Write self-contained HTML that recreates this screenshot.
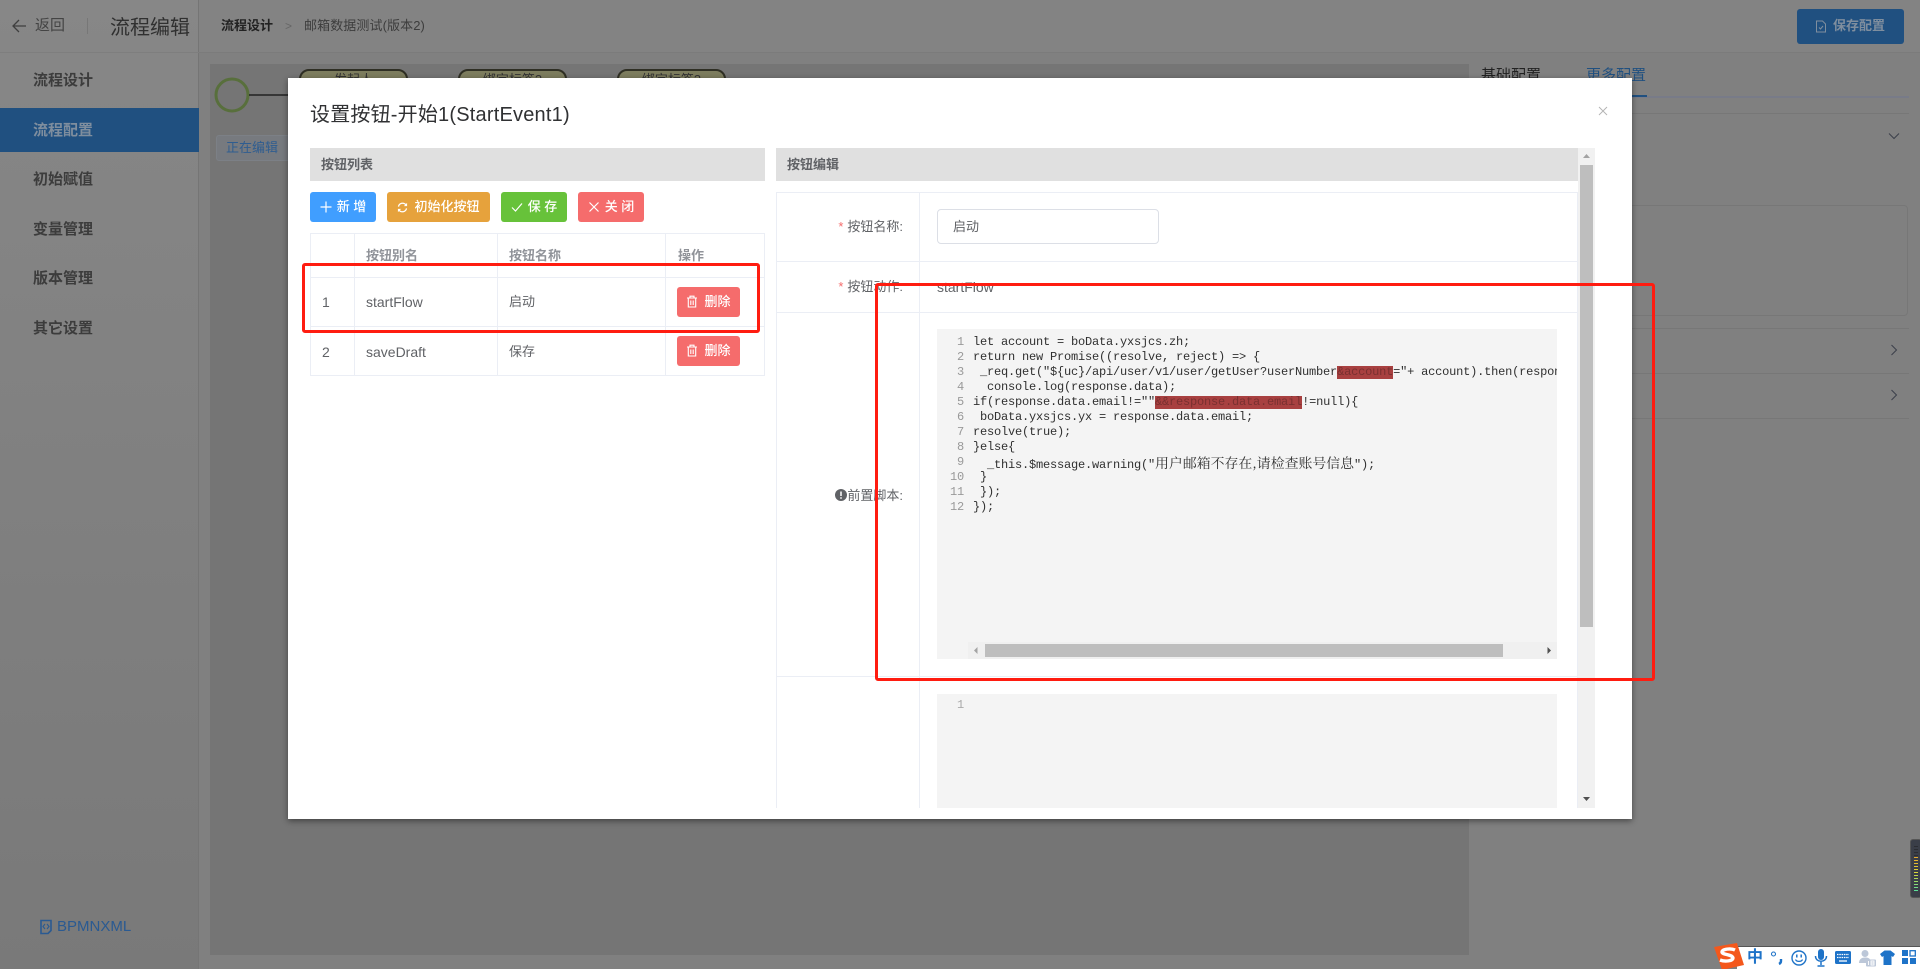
<!DOCTYPE html>
<html lang="zh">
<head>
<meta charset="utf-8">
<title>流程编辑</title>
<style>
html,body{margin:0;padding:0;width:1920px;height:969px;overflow:hidden;background:#808080}
body{position:relative;font-family:"Liberation Sans","Noto Sans CJK SC",sans-serif;font-size:13px;color:#606266}
.a{position:absolute}
.t{position:absolute;white-space:nowrap}
.side{left:0;top:0;width:199px;height:969px;background:linear-gradient(#878787,#797979);border-right:1px solid #757575;box-sizing:border-box}
.si{position:absolute;left:33px;font-size:15px;font-weight:700;color:#3c3c3c;line-height:20px;white-space:nowrap}
.modal{left:288px;top:78px;width:1344px;height:741px;background:#fff;box-shadow:0 2px 6px rgba(0,0,0,.45)}
.sec{background:#e0e0e0;height:33px;line-height:33px;font-weight:700;font-size:13px;color:#606266;box-sizing:border-box;padding-left:11px}
.btn{position:absolute;height:30px;line-height:30px;border-radius:3px;color:#fff;font-size:13px;font-weight:500;text-align:center;white-space:nowrap}
.btn svg{vertical-align:-2px;margin-right:5px}
.l{position:absolute;background:#ebeef5}
.code{position:absolute;background:#f4f4f4;overflow:hidden}
.cl{position:absolute;left:36px;height:15px;line-height:15px;font-family:"Liberation Mono","Noto Serif CJK SC",monospace;font-size:12px;letter-spacing:-.2px;color:#303030;white-space:pre}
.n{position:absolute;left:0;width:27px;text-align:right;height:15px;line-height:15px;font-family:"Liberation Mono",monospace;font-size:12px;letter-spacing:-.2px;color:#999}
.cl b{font-weight:400;font-family:"Noto Serif CJK SC",serif;font-size:13.9px;letter-spacing:0}
.cl i{font-style:normal;background:#a84040;color:#7a3030;display:inline-block;height:13px;line-height:13px}
.red{position:absolute;border:3px solid #ff1c10;border-radius:3px;box-sizing:border-box;pointer-events:none}
.lab{position:absolute;right:1017px;font-size:13px;color:#606266;line-height:20px;white-space:nowrap}
.lab s{text-decoration:none;color:#f56c6c;margin-right:4px}
.task{position:absolute;top:69px;width:109px;height:60px;background:#7d7d5e;border:2px solid #2f2f24;border-radius:10px;box-sizing:border-box;text-align:center;font-size:13px;color:#333;line-height:18px}
.bluei{color:#1e73c8}
.lat{font-size:14px}
</style>
</head>
<body>
<!-- background page -->
<div class="a" style="left:199px;top:0;width:1721px;height:52px;background:#838383;border-bottom:1px solid #7b7b7b"></div>
<div class="a side"></div>
<div class="a" style="left:0;top:0;width:199px;height:52px;border-bottom:1px solid #7e7e7e;box-sizing:content-box"></div>
<svg class="a" style="left:10px;top:17px" width="20" height="18" viewBox="0 0 20 18"><path d="M16 9H3M9 3L3 9l6 6" fill="none" stroke="#3f3f3f" stroke-width="1.3"/></svg>
<div class="t" style="left:35px;top:16px;font-size:15px;line-height:20px;color:#444">返回</div>
<div class="a" style="left:87px;top:18px;width:1px;height:16px;background:#777"></div>
<div class="t" style="left:110px;top:14px;font-size:20px;line-height:28px;color:#303030">流程编辑</div>
<div class="t" style="left:221px;top:16px;font-size:13px;font-weight:700;line-height:20px;color:#222">流程设计</div>
<div class="t" style="left:285px;top:16px;font-size:12px;line-height:20px;color:#666">&gt;</div>
<div class="t" style="left:304px;top:16px;font-size:13px;letter-spacing:.1px;line-height:20px;color:#3d3d3d">邮箱数据测试(版本2)</div>

<div class="a" style="left:0;top:108px;width:199px;height:44px;background:#205080"></div>
<div class="si" style="top:71px">流程设计</div>
<div class="si" style="top:121px;color:#7f8e9e">流程配置</div>
<div class="si" style="top:170px">初始赋值</div>
<div class="si" style="top:220px">变量管理</div>
<div class="si" style="top:269px">版本管理</div>
<div class="si" style="top:319px">其它设置</div>
<svg class="a" style="left:39px;top:919px" width="14" height="16" viewBox="0 0 14 16"><path d="M2 1.500h10v10l-3 3H2z" fill="none" stroke="#2a5a92" stroke-width="1.600"/><path d="M6 5L4 7.500 6 10M8 5l2 2.500L8 10" fill="none" stroke="#2a5a92" stroke-width="1.100"/></svg>
<div class="t" style="left:57px;top:917px;font-size:15px;line-height:20px;color:#2a5a92">BPMNXML</div>

<!-- canvas -->
<div class="a" style="left:210px;top:64px;width:1259px;height:891px;background:#757575"></div>
<svg class="a" style="left:210px;top:64px" width="90" height="60" viewBox="0 0 90 60"><circle cx="22" cy="31" r="16" fill="none" stroke="#586f3c" stroke-width="3"/><path d="M39 31H78" stroke="#111" stroke-width="1.300"/></svg>
<div class="task" style="left:299px">发起人</div>
<div class="task" style="left:458px">绑定标签2</div>
<div class="task" style="left:617px">绑定标签3</div>
<div class="a" style="left:216px;top:135px;width:90px;height:26px;background:#777a7f;border:1px solid #7c8086;box-sizing:border-box;border-radius:3px"></div>
<div class="t" style="left:226px;top:138px;font-size:13px;line-height:20px;color:#2f5d90">正在编辑</div>

<!-- right panel -->
<div class="t" style="left:1481px;top:64px;font-size:15px;line-height:24px;color:#222">基础配置</div>
<div class="t" style="left:1586px;top:64px;font-size:15px;line-height:24px;color:#205080">更多配置</div>
<div class="a" style="left:1469px;top:96px;width:440px;height:2px;background:#787b88"></div>
<div class="a" style="left:1586px;top:95px;width:61px;height:2px;background:#205080"></div>
<div class="a" style="left:1469px;top:113px;width:440px;height:1px;background:#777"></div>
<div class="a" style="left:1480px;top:205px;width:428px;height:111px;border:1px solid #777;border-radius:4px;box-sizing:border-box"></div>
<div class="a" style="left:1469px;top:328px;width:440px;height:1px;background:#777"></div>
<div class="a" style="left:1469px;top:373px;width:440px;height:1px;background:#777"></div>
<div class="a" style="left:1469px;top:418px;width:440px;height:1px;background:#777"></div>
<svg class="a" style="left:1888px;top:131px" width="12" height="10" viewBox="0 0 12 10"><path d="M1 2.500l5 5 5-5" fill="none" stroke="#3b3f4a" stroke-width="1"/></svg>
<svg class="a" style="left:1889px;top:344px" width="10" height="12" viewBox="0 0 10 12"><path d="M2.500 1l5 5-5 5" fill="none" stroke="#3b3f4a" stroke-width="1"/></svg>
<svg class="a" style="left:1889px;top:389px" width="10" height="12" viewBox="0 0 10 12"><path d="M2.500 1l5 5-5 5" fill="none" stroke="#3b3f4a" stroke-width="1"/></svg>
<div class="a" style="left:1797px;top:9px;width:107px;height:35px;background:#205080;border-radius:3px"></div>
<svg class="a" style="left:1815px;top:20px" width="12" height="13" viewBox="0 0 12 13"><path d="M1.500 1h6l3 3v8h-9z" fill="none" stroke="#7f8e9e" stroke-width="1"/><path d="M4 7.500l1.500 1.500L8 6" fill="none" stroke="#7f8e9e" stroke-width="1"/></svg>
<div class="t" style="left:1833px;top:16px;font-size:13px;font-weight:700;line-height:20px;color:#7f8e9e">保存配置</div>

<!-- meter -->
<div class="a" style="left:1910px;top:839px;width:12px;height:59px;background:#3a3e48;border-radius:3px;border:1px solid #555;box-sizing:border-box"></div>
<div class="a" style="left:1914px;top:846px;width:4px;height:46px;background:repeating-linear-gradient(#2b2d33 0 1px,transparent 1px 3px)"></div>
<div class="a" style="left:1914px;top:857px;width:4px;height:35px;background:repeating-linear-gradient(transparent 0 1px,#3a3e48 1px 3px),linear-gradient(#e6a82a,#d8d838 45%,#52e0a0)"></div>

<!-- modal -->
<div class="a modal"></div>
<div class="t" style="left:310px;top:100px;font-size:20px;letter-spacing:.2px;line-height:30px;color:#303133">设置按钮-开始1(StartEvent1)</div>
<svg class="a" style="left:1598px;top:106px" width="10" height="10" viewBox="0 0 10 10"><path d="M1 1l8 8M9 1L1 9" stroke="#b5b5b5" stroke-width="1"/></svg>

<div class="a sec" style="left:310px;top:148px;width:455px">按钮列表</div>
<div class="btn" style="left:310px;top:192px;width:66px;background:#409eff"><svg width="12" height="12" viewBox="0 0 12 12"><path d="M6 .5v11M.5 6h11" stroke="#fff" stroke-width="1.200"/></svg>新 增</div>
<div class="btn" style="left:387px;top:192px;width:103px;background:#e6a23c"><svg width="11" height="11" viewBox="0 0 12 12" style="margin-right:6px"><path d="M10 3.500A4.600 4.600 0 0 0 1.600 5M2 8.500a4.600 4.600 0 0 0 8.400-1.500" fill="none" stroke="#fff" stroke-width="1.400"/><path d="M11 1v3.500H7.500M1 11V7.500h3.500" fill="#fff"/></svg>初始化按钮</div>
<div class="btn" style="left:501px;top:192px;width:66px;background:#67c23a"><svg width="12" height="12" viewBox="0 0 12 12"><path d="M1 6.500l3.500 3.500L11 2.500" fill="none" stroke="#fff" stroke-width="1.200"/></svg>保 存</div>
<div class="btn" style="left:578px;top:192px;width:66px;background:#f56c6c"><svg width="12" height="12" viewBox="0 0 12 12"><path d="M1.500 1.500l9 9M10.500 1.500l-9 9" stroke="#fff" stroke-width="1.200"/></svg>关 闭</div>

<!-- left table -->
<div class="l" style="left:310px;top:233px;width:455px;height:1px"></div>
<div class="l" style="left:310px;top:277px;width:455px;height:1px"></div>
<div class="l" style="left:310px;top:326px;width:455px;height:1px"></div>
<div class="l" style="left:310px;top:375px;width:455px;height:1px"></div>
<div class="l" style="left:310px;top:233px;width:1px;height:143px"></div>
<div class="l" style="left:354px;top:233px;width:1px;height:143px"></div>
<div class="l" style="left:497px;top:233px;width:1px;height:143px"></div>
<div class="l" style="left:665px;top:233px;width:1px;height:143px"></div>
<div class="l" style="left:764px;top:233px;width:1px;height:143px"></div>
<div class="t" style="left:366px;top:246px;line-height:20px;font-weight:700;color:#909399">按钮别名</div>
<div class="t" style="left:509px;top:246px;line-height:20px;font-weight:700;color:#909399">按钮名称</div>
<div class="t" style="left:678px;top:246px;line-height:20px;font-weight:700;color:#909399">操作</div>
<div class="t lat" style="left:322px;top:292px;line-height:20px">1</div>
<div class="t lat" style="left:366px;top:292px;line-height:20px">startFlow</div>
<div class="t" style="left:509px;top:292px;line-height:20px">启动</div>
<div class="t lat" style="left:322px;top:342px;line-height:20px">2</div>
<div class="t lat" style="left:366px;top:342px;line-height:20px">saveDraft</div>
<div class="t" style="left:509px;top:342px;line-height:20px">保存</div>
<div class="btn" style="left:677px;top:287px;width:63px;background:#f56c6c"><svg width="12" height="13" viewBox="0 0 12 13" style="margin-right:6px"><path d="M1 3h10M4 3V1.200h4V3M2.300 3v9h7.400V3M4.800 5.500v4.500M7.200 5.500v4.500" fill="none" stroke="#fff" stroke-width="1.100"/></svg>删除</div>
<div class="btn" style="left:677px;top:336px;width:63px;background:#f56c6c"><svg width="12" height="13" viewBox="0 0 12 13" style="margin-right:6px"><path d="M1 3h10M4 3V1.200h4V3M2.300 3v9h7.400V3M4.800 5.500v4.500M7.200 5.500v4.500" fill="none" stroke="#fff" stroke-width="1.100"/></svg>删除</div>

<!-- right section -->
<div class="a sec" style="left:776px;top:148px;width:802px">按钮编辑</div>
<div class="l" style="left:776px;top:192px;width:802px;height:1px"></div>
<div class="l" style="left:776px;top:261px;width:802px;height:1px"></div>
<div class="l" style="left:776px;top:312px;width:802px;height:1px"></div>
<div class="l" style="left:776px;top:676px;width:802px;height:1px"></div>
<div class="l" style="left:776px;top:192px;width:1px;height:616px"></div>
<div class="l" style="left:919px;top:192px;width:1px;height:616px"></div>
<div class="l" style="left:1577px;top:192px;width:1px;height:616px"></div>
<div class="lab" style="top:217px"><s>*</s>按钮名称:</div>
<div class="lab" style="top:277px"><s>*</s>按钮动作:</div>
<div class="lab" style="top:486px"><svg width="12" height="12" viewBox="0 0 12 12" style="vertical-align:-1px"><circle cx="6" cy="6" r="6" fill="#606266"/><path d="M6 2.500v4.500M6 8.300v1.400" stroke="#fff" stroke-width="1.500"/></svg>前置脚本:</div>
<div class="a" style="left:937px;top:209px;width:222px;height:35px;border:1px solid #dcdfe6;border-radius:4px;box-sizing:border-box"></div>
<div class="t" style="left:953px;top:217px;line-height:20px">启动</div>
<div class="t lat" style="left:937px;top:277px;line-height:20px">startFlow</div>

<div class="code" style="left:937px;top:329px;width:620px;height:330px">
<div class="n" style="top:6px">1</div><div class="n" style="top:21px">2</div><div class="n" style="top:36px">3</div><div class="n" style="top:51px">4</div><div class="n" style="top:66px">5</div><div class="n" style="top:81px">6</div><div class="n" style="top:96px">7</div><div class="n" style="top:111px">8</div><div class="n" style="top:126px">9</div><div class="n" style="top:141px">10</div><div class="n" style="top:156px">11</div><div class="n" style="top:171px">12</div>
<div class="cl" style="top:6px">let account = boData.yxsjcs.zh;</div>
<div class="cl" style="top:21px">return new Promise((resolve, reject) =&gt; {</div>
<div class="cl" style="top:36px"> _req.get("${uc}/api/user/v1/user/getUser?userNumber<i>&amp;account</i>="+ account).then(response =&gt; {</div>
<div class="cl" style="top:51px">  console.log(response.data);</div>
<div class="cl" style="top:66px">if(response.data.email!=""<i>&amp;&amp;response.data.email</i>!=null){</div>
<div class="cl" style="top:81px"> boData.yxsjcs.yx = response.data.email;</div>
<div class="cl" style="top:96px">resolve(true);</div>
<div class="cl" style="top:111px">}else{</div>
<div class="cl" style="top:126px">  _this.$message.warning("<b>用户邮箱不存在,请检查账号信息</b>");</div>
<div class="cl" style="top:141px"> }</div>
<div class="cl" style="top:156px"> });</div>
<div class="cl" style="top:171px">});</div>
<div class="a" style="left:31px;top:313px;width:589px;height:17px;background:#f0f0f0"></div>
<div class="a" style="left:48px;top:315px;width:518px;height:13px;background:#bebebe"></div>
<svg class="a" style="left:36px;top:317px" width="6" height="9" viewBox="0 0 6 9"><path d="M4.500 1L1 4.500 4.500 8z" fill="#a3a3a3"/></svg>
<svg class="a" style="left:609px;top:317px" width="6" height="9" viewBox="0 0 6 9"><path d="M1.500 1L5 4.500 1.500 8z" fill="#505050"/></svg>
</div>
<div class="code" style="left:937px;top:694px;width:620px;height:114px">
<div class="n" style="top:4px;width:27px;color:#aaa">1</div>
</div>

<!-- vertical scrollbar -->
<div class="a" style="left:1578px;top:148px;width:17px;height:660px;background:#f1f1f1"></div>
<div class="a" style="left:1580px;top:165px;width:13px;height:462px;background:#bebebe"></div>
<svg class="a" style="left:1582px;top:153px" width="9" height="6" viewBox="0 0 9 6"><path d="M4.500 1L8 5H1z" fill="#a3a3a3"/></svg>
<svg class="a" style="left:1582px;top:796px" width="9" height="6" viewBox="0 0 9 6"><path d="M1 1h7L4.500 5z" fill="#505050"/></svg>

<!-- annotation rects -->
<div class="red" style="left:302px;top:263px;width:458px;height:70px"></div>
<div class="red" style="left:875px;top:283px;width:780px;height:398px"></div>

<!-- IME bar -->
<div class="a" style="left:1737px;top:946px;width:183px;height:23px;background:#fff;border-top:1px solid #555;box-sizing:border-box"></div>
<svg class="a" style="left:1713px;top:942px" width="32" height="27" viewBox="0 0 32 27"><path d="M1 5L24 1l7 22-22 5z" fill="#f4581c"/><path d="M22 8c-4-2-13-1-13 2 0 3 10 2 11 6 0 3-8 4-13 2" fill="none" stroke="#fff" stroke-width="3.400"/></svg>
<div class="t bluei" style="left:1747px;top:948px;font-size:16px;font-weight:700;line-height:20px">中</div>
<svg class="a" style="left:1770px;top:950px" width="14" height="16" viewBox="0 0 14 16"><circle cx="3.500" cy="4" r="2" fill="none" stroke="#1e73c8" stroke-width="1.100"/><path d="M11 9v2c0 1.500-1 2.500-2 3" fill="none" stroke="#1e73c8" stroke-width="2.400"/></svg>
<svg class="a" style="left:1791px;top:950px" width="16" height="16" viewBox="0 0 16 16"><circle cx="8" cy="8" r="7" fill="none" stroke="#1e73c8" stroke-width="1.400"/><path d="M5.800 4.500v3M10.200 4.500v3" stroke="#1e73c8" stroke-width="1.500"/><path d="M4.500 9.500c1 2.500 6 2.500 7 0" fill="none" stroke="#1e73c8" stroke-width="1.200"/></svg>
<svg class="a" style="left:1814px;top:949px" width="14" height="18" viewBox="0 0 14 18"><rect x="4" y="0" width="6" height="11" rx="3" fill="#1e73c8"/><path d="M1.500 7c0 7 11 7 11 0M7 13v3M3.500 17h7" fill="none" stroke="#1e73c8" stroke-width="1.500"/></svg>
<svg class="a" style="left:1835px;top:951px" width="16" height="13" viewBox="0 0 16 13"><rect width="16" height="13" rx="1.500" fill="#1e73c8"/><path d="M2 3.500h12M2 6.500h12" stroke="#fff" stroke-width="1.300" stroke-dasharray="1.500 .8"/><path d="M4 10h8" stroke="#fff" stroke-width="1.300"/></svg>
<svg class="a" style="left:1858px;top:949px" width="18" height="18" viewBox="0 0 18 18"><circle cx="7" cy="4.500" r="3.500" fill="#bcc7d8"/><path d="M1 14c0-4 3-5.500 6-5.500s4 .5 5 2v3.500z" fill="#bcc7d8"/><rect x="8" y="10.500" width="10" height="7" rx="1" fill="#bcc7d8"/><path d="M10.500 12v4M13 12h3v4h-3zM13 14h3" stroke="#fff" stroke-width=".9" fill="none"/></svg>
<svg class="a" style="left:1880px;top:950px" width="15" height="15" viewBox="0 0 15 15"><path d="M4.500 .5h6L15 4l-2 3-1.500-1v9h-8V6L2 7 0 4z" fill="#1e73c8"/></svg>
<svg class="a" style="left:1902px;top:950px" width="14" height="14" viewBox="0 0 14 14"><rect width="6" height="6" fill="#1e73c8"/><rect x="8" y=".7" width="5.300" height="5.300" fill="none" stroke="#1e73c8" stroke-width="1.300"/><rect y="8" width="6" height="6" fill="#1e73c8"/><rect x="8" y="8" width="6" height="6" fill="#1e73c8"/></svg>
</body>
</html>
